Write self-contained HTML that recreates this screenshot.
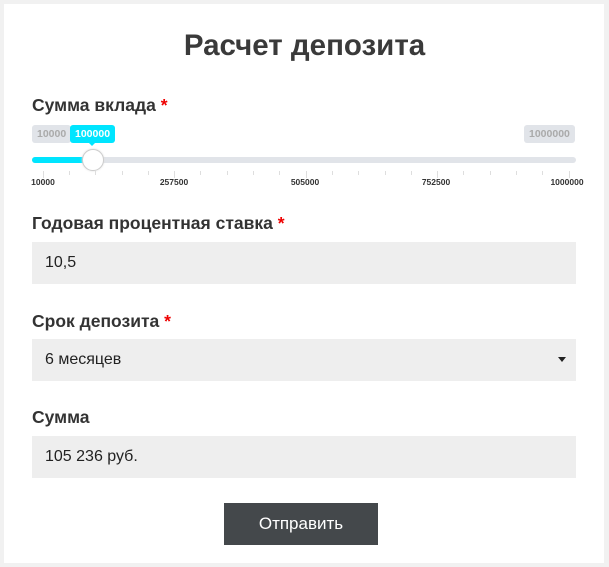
<!DOCTYPE html><html><head><meta charset="utf-8"><style>
body{margin:0;width:609px;height:567px;background:#f1f1f1;font-family:"Liberation Sans",sans-serif;position:relative;overflow:hidden}
.card{position:absolute;left:4px;top:4px;width:600px;height:559px;background:#fff}
.a{position:absolute}
h1{position:absolute;left:0;width:609px;top:29px;margin:0;text-align:center;font-size:29.5px;font-weight:bold;color:#3a3a3a}
.lbl{position:absolute;left:32px;font-size:17.5px;font-weight:bold;color:#333}
.lbl span{color:#e00}
.inp{position:absolute;left:32px;width:544px;height:42px;background:#eee;font-size:16px;color:#222;line-height:42px;box-sizing:border-box;padding-left:13px}
.tag{position:absolute;top:125px;height:18px;border-radius:3px;font-size:10.5px;font-weight:bold;line-height:18px;padding:0 5px;background:#e1e4e9;color:#aaa}
.tick{position:absolute;top:171px;width:1px;height:4px;background:#dedede}
.tick.m{height:7px}
.num{position:absolute;top:177px;font-size:8.5px;font-weight:bold;color:#333;transform:translateX(-50%)}
</style></head><body>
<div class="card"></div>
<h1>Расчет депозита</h1>
<div class="lbl" style="top:95px">Сумма вклада <span>*</span></div>
<div class="tag" style="left:32px">10000</div>
<div class="tag" style="left:524px">1000000</div>
<div class="tag" style="left:70px;background:#00e5ff;color:#fff;">100000</div>
<div class="a" style="left:89px;top:143px;border:3px solid transparent;border-top-color:#00e5ff"></div>
<div class="a" style="left:32px;top:157px;width:544px;height:6px;border-radius:3px;background:#e1e4e9"></div>
<div class="a" style="left:32px;top:157px;width:62px;height:6px;border-radius:3px 0 0 3px;background:#00e5ff"></div>
<div class="a" style="left:82px;top:149px;width:20px;height:20px;border-radius:50%;background:#fff;border:1px solid #ccc;box-shadow:0 0 2px #ddd"></div>
<div id="t"></div>
<div class="num" style="left:43px">10000</div>
<div class="num" style="left:174px">257500</div>
<div class="num" style="left:305px">505000</div>
<div class="num" style="left:436px">752500</div>
<div class="num" style="left:567px">1000000</div>
<script>
var h='';for(var i=0;i<21;i++){var x=42.6+i*26.3;h+='<div class="tick'+(i%5==0?' m':'')+'" style="left:'+x.toFixed(1)+'px"></div>';}document.getElementById('t').innerHTML=h;
</script>
<div class="lbl" style="top:213px">Годовая процентная ставка <span>*</span></div>
<div class="inp" style="top:242px">10,5</div>
<div class="lbl" style="top:311px">Срок депозита <span>*</span></div>
<div class="inp" style="top:339px">6 месяцев</div>
<div class="a" style="left:558px;top:357px;border:4px solid transparent;border-top:5px solid #222"></div>
<div class="lbl" style="top:407px">Сумма</div>
<div class="inp" style="top:436px">105 236 руб.</div>
<div class="a" style="left:224px;top:503px;width:154px;height:42px;background:#44484b;color:#fff;font-size:17px;line-height:42px;text-align:center">Отправить</div>
</body></html>
